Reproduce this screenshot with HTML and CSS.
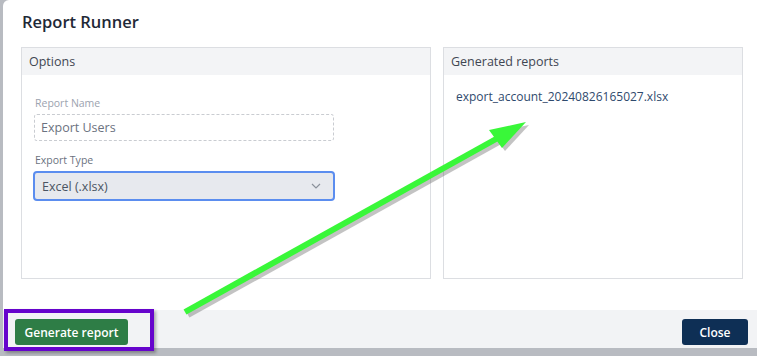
FILE: index.html
```html
<!DOCTYPE html>
<html lang="en">
<head>
  <meta charset="UTF-8" />
  <title>Report Runner</title>
  <link rel="stylesheet" href="styles.css">
</head>
<body>

<!-- Modal -->
<div class="modal">
  <h1 class="modal-title">Report Runner</h1>

  <div class="modal-body">
    <div class="panel">
      <div class="panel-head">Options</div>
      <div class="panel-content">
        <label class="field-label muted">Report Name</label>
        <div class="text-input">Export Users</div>

        <label class="field-label">Export Type</label>
        <div class="select-box">
          <span>Excel (.xlsx)</span>
          <svg width="10" height="6" viewBox="0 0 10 6"><path d="M1 1 L5 5 L9 1" fill="none" stroke="#8b919b" stroke-width="1.2"/></svg>
        </div>
      </div>
    </div>

    <div class="panel">
      <div class="panel-head">Generated reports</div>
      <div class="panel-content">
        <a class="report-link" href="#">export_account_20240826165027.xlsx</a>
      </div>
    </div>
  </div>

  <div class="modal-footer">
    <button class="btn btn-green">Generate report</button>
    <button class="btn btn-navy">Close</button>
  </div>
</div>

<!-- annotations -->
<div class="highlight-box"></div>
<svg class="arrow" width="757" height="356" viewBox="0 0 757 356">
  <g transform="translate(3,3)" fill="#555" opacity="0.35">
    <line x1="185" y1="312" x2="505" y2="134" stroke="#555" stroke-width="6"/>
    <polygon points="526,122 489,130 502,148"/>
  </g>
  <line x1="185" y1="312" x2="505" y2="134" stroke="#39f739" stroke-width="6"/>
  <polygon points="526,122 489,130 502,148" fill="#39f739"/>
</svg>

</body>
</html>
```

FILE: styles.css
```css
body {
  margin: 0;
  width: 757px;
  height: 356px;
  overflow: hidden;
  background: #b8bbc1;
  font-family: 'Open Sans', sans-serif;
  position: relative;
}

.modal {
  margin-left: 3px;
  height: 348px;
  background: #ffffff;
  border-top-left-radius: 6px;
  display: flex;
  flex-direction: column;
}

.modal-title {
  margin: 0;
  padding: 10px 0 0 19px;
  height: 37px;
  font-size: 16.5px;
  font-weight: 600;
  color: #1f2937;
}

.modal-body {
  display: grid;
  grid-template-columns: 410px 300px;
  gap: 12px;
  padding-left: 18px;
  height: 232px;
}

.panel {
  border: 1px solid #dcdee2;
  display: flex;
  flex-direction: column;
}

.panel-head {
  background: #f3f4f6;
  height: 27px;
  line-height: 27px;
  padding-left: 7px;
  font-size: 12.5px;
  color: #3f4652;
}

.panel-content {
  padding: 13px 12px;
  display: flex;
  flex-direction: column;
  align-items: flex-start;
}

.field-label {
  font-size: 10.5px;
  color: #6b7280;
  margin: 0 0 4px 1px;
}

.field-label.muted {
  color: #9ca3af;
  margin-top: 8px;
}

.text-input {
  width: 292px;
  height: 25px;
  line-height: 25px;
  border: 1px dashed #c9ccd1;
  border-radius: 3px;
  padding-left: 6px;
  font-size: 12.5px;
  color: #6b7280;
  margin-bottom: 12px;
}

.select-box {
  width: 279px;
  height: 26px;
  margin-left: -1px;
  border: 2px solid #5b8def;
  border-radius: 4px;
  background: #e7e9ee;
  padding: 0 12px 0 7px;
  display: flex;
  align-items: center;
  justify-content: space-between;
  font-size: 12.5px;
  color: #4b5563;
}

.report-link {
  margin-top: 0;
  font-size: 12px;
  color: #2f4a6d;
  text-decoration: none;
}

.modal-footer {
  margin-top: 31px;
  flex: 1;
  background: #f2f3f5;
  display: flex;
  justify-content: space-between;
  align-items: flex-start;
  padding: 9px 9px 0 12px;
}

.btn {
  height: 26px;
  border: none;
  border-radius: 3px;
  font-family: 'Open Sans', sans-serif;
  font-size: 12px;
  font-weight: 600;
  color: #ffffff;
  padding: 0 6px;
  white-space: nowrap;
}

.btn-green {
  background: #2e7d46;
  width: 113px;
}

.btn-navy {
  background: #0e2f55;
  width: 66px;
}

.highlight-box {
  position: absolute;
  left: 4px;
  top: 309px;
  width: 142px;
  height: 34px;
  border: 4px solid #6604cc;
  box-shadow: 2px 2px 3px rgba(0,0,0,0.3);
}

.arrow {
  position: absolute;
  left: 0;
  top: 0;
}
```
